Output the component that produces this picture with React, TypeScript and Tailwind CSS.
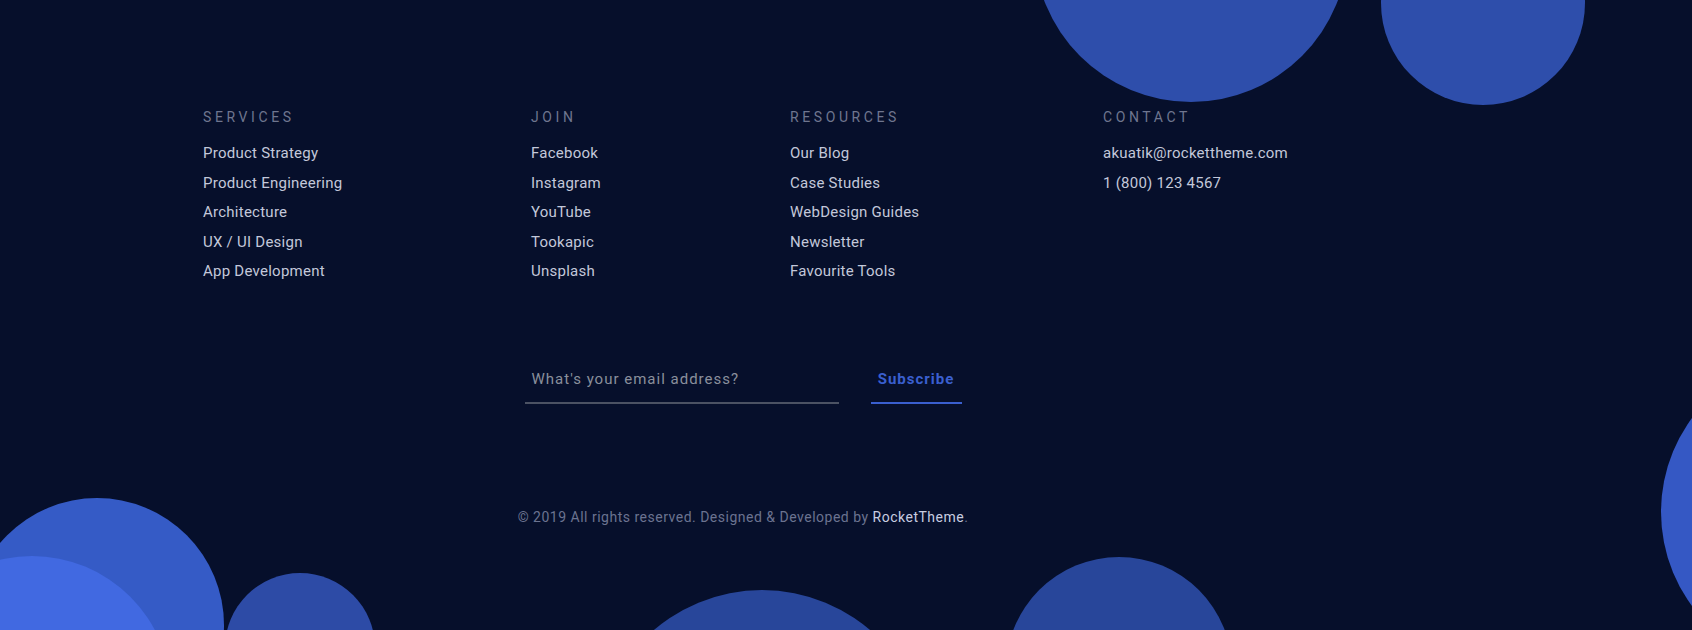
import React from "react";

const services = ["Product Strategy", "Product Engineering", "Architecture", "UX / UI Design", "App Development"];
const join = ["Facebook", "Instagram", "YouTube", "Tookapic", "Unsplash"];
const resources = ["Our Blog", "Case Studies", "WebDesign Guides", "Newsletter", "Favourite Tools"];
const contact = ["akuatik@rockettheme.com", "1 (800) 123 4567"];

function Col({ title, items, width }: { title: string; items: string[]; width: string }) {
  return (
    <div className={width}>
      <h3 className="text-[14px] leading-[20px] tracking-[3.6px] text-[#6f768f] font-normal">{title}</h3>
      <ul className="mt-[12px]">
        {items.map((i) => (
          <li key={i} className="text-[15px] leading-[29.6px] tracking-[0.25px] text-[#c3c8da]">
            {i}
          </li>
        ))}
      </ul>
    </div>
  );
}

export default function App() {
  return (
    <div
      className="relative h-[630px] w-full overflow-hidden bg-[#060f2b]"
      style={{ fontFamily: "Roboto, 'Liberation Sans', sans-serif" }}
    >
      <div className="absolute left-[1034px] top-[-212px] h-[314px] w-[314px] rounded-full bg-[#2e4eab]" />
      <div className="absolute left-[1381px] top-[-99px] h-[204px] w-[204px] rounded-full bg-[#2e4eab]" />
      <div className="absolute left-[-30px] top-[498px] h-[254px] w-[254px] rounded-full bg-[#355bc6]" />
      <div className="absolute left-[-107px] top-[556px] h-[278px] w-[278px] rounded-full bg-[#4169e1]" />
      <div className="absolute left-[225px] top-[573px] h-[150px] w-[150px] rounded-full bg-[#2d4ba6]" />
      <div className="absolute left-[596px] top-[590px] h-[332px] w-[332px] rounded-full bg-[#28469a]" />
      <div className="absolute left-[1006px] top-[557px] h-[226px] w-[226px] rounded-full bg-[#28469a]" />
      <div className="absolute left-[1661px] top-[354px] h-[316px] w-[316px] rounded-full bg-[#3558c4]" />

      <div className="relative ml-[203px] w-[1080px] pt-[107px]">
        <div className="flex">
          <Col title="SERVICES" items={services} width="w-[328px]" />
          <Col title="JOIN" items={join} width="w-[259px]" />
          <Col title="RESOURCES" items={resources} width="w-[313px]" />
          <Col title="CONTACT" items={contact} width="w-[180px]" />
        </div>

        <div className="mt-[69px] flex justify-center">
          <div className="flex gap-[32px]">
            <div className="flex h-[48px] w-[314px] items-center border-b-2 border-[#4b5263] pl-[7px] text-[15px] tracking-[1px] text-[#8a8f9c]">
              What's your email address?
            </div>
            <div className="flex h-[48px] w-[91px] items-center justify-center border-b-2 border-[#3a5fcf] text-[15px] font-bold tracking-[1px] text-[#3a5fcf]">
              Subscribe
            </div>
          </div>
        </div>

        <p className="mt-[103px] text-center text-[14px] leading-[20px] tracking-[0.5px] text-[#6b7390]">
          © 2019 All rights reserved. Designed &amp; Developed by <span className="text-[#c8cde0]">RocketTheme</span>.
        </p>
      </div>
    </div>
  );
}
